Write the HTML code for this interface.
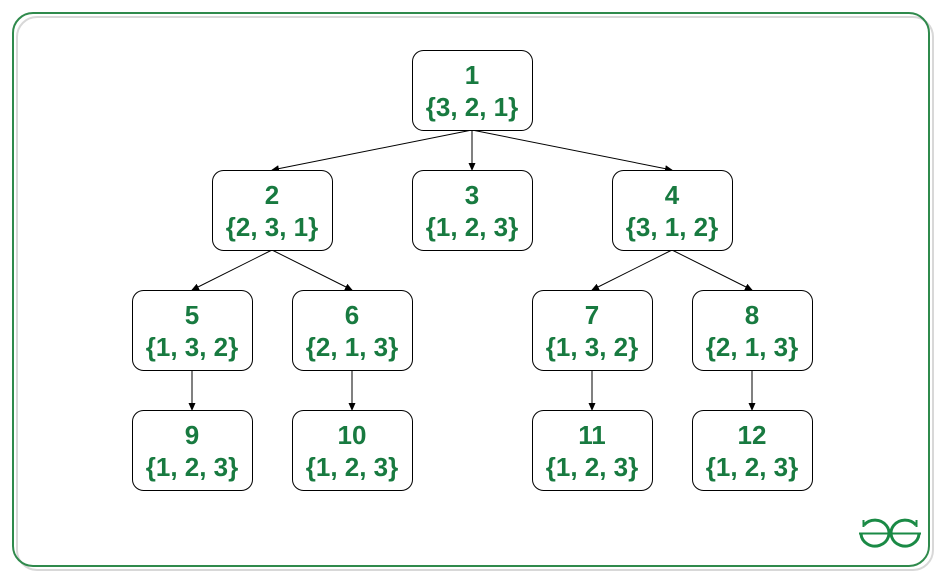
<!DOCTYPE html>
<html><head><meta charset="utf-8"><style>
html,body{margin:0;padding:0;background:#fff;}
svg{display:block}
text{font-family:"Liberation Sans",sans-serif;font-weight:bold;fill:#187a40;text-anchor:middle}
</style></head><body>
<svg width="945" height="581" viewBox="0 0 945 581" xmlns="http://www.w3.org/2000/svg">
<defs><marker id="a" markerWidth="8" markerHeight="8" refX="7" refY="4" orient="auto" markerUnits="userSpaceOnUse"><path d="M0,0.5 L8,4 L0,7.5 Z" fill="#000"/></marker></defs>
<rect x="17" y="17" width="916" height="553" rx="20" fill="none" stroke="#d8d8d8" stroke-width="2"/>
<rect x="13" y="13" width="916" height="553" rx="20" fill="none" stroke="#2f8a4c" stroke-width="2"/>
<g stroke="#000" stroke-width="1" marker-end="url(#a)">
<line x1="472" y1="130" x2="272" y2="170"/>
<line x1="472" y1="130" x2="472" y2="170"/>
<line x1="472" y1="130" x2="672" y2="170"/>
<line x1="272" y1="250" x2="192" y2="290"/>
<line x1="272" y1="250" x2="352" y2="290"/>
<line x1="672" y1="250" x2="592" y2="290"/>
<line x1="672" y1="250" x2="752" y2="290"/>
<line x1="192" y1="370" x2="192" y2="410"/>
<line x1="352" y1="370" x2="352" y2="410"/>
<line x1="592" y1="370" x2="592" y2="410"/>
<line x1="752" y1="370" x2="752" y2="410"/>
</g>
<g fill="#fff" stroke="#000" stroke-width="1">
<rect x="412.5" y="50.5" width="120" height="80" rx="11"/>
<rect x="212.5" y="170.5" width="120" height="80" rx="11"/>
<rect x="412.5" y="170.5" width="120" height="80" rx="11"/>
<rect x="612.5" y="170.5" width="120" height="80" rx="11"/>
<rect x="132.5" y="290.5" width="120" height="80" rx="11"/>
<rect x="292.5" y="290.5" width="120" height="80" rx="11"/>
<rect x="532.5" y="290.5" width="120" height="80" rx="11"/>
<rect x="692.5" y="290.5" width="120" height="80" rx="11"/>
<rect x="132.5" y="410.5" width="120" height="80" rx="11"/>
<rect x="292.5" y="410.5" width="120" height="80" rx="11"/>
<rect x="532.5" y="410.5" width="120" height="80" rx="11"/>
<rect x="692.5" y="410.5" width="120" height="80" rx="11"/>
</g>
<g font-size="26">
<text x="472" y="84">1</text><text x="472" y="116">{3, 2, 1}</text>
<text x="272" y="204">2</text><text x="272" y="236">{2, 3, 1}</text>
<text x="472" y="204">3</text><text x="472" y="236">{1, 2, 3}</text>
<text x="672" y="204">4</text><text x="672" y="236">{3, 1, 2}</text>
<text x="192" y="324">5</text><text x="192" y="356">{1, 3, 2}</text>
<text x="352" y="324">6</text><text x="352" y="356">{2, 1, 3}</text>
<text x="592" y="324">7</text><text x="592" y="356">{1, 3, 2}</text>
<text x="752" y="324">8</text><text x="752" y="356">{2, 1, 3}</text>
<text x="192" y="444">9</text><text x="192" y="476">{1, 2, 3}</text>
<text x="352" y="444">10</text><text x="352" y="476">{1, 2, 3}</text>
<text x="592" y="444">11</text><text x="592" y="476">{1, 2, 3}</text>
<text x="752" y="444">12</text><text x="752" y="476">{1, 2, 3}</text>
</g>
<g fill="none" stroke="#1a8a45" stroke-width="3">
<path d="M864,525 A14,13 0 1 1 861,534"/>
<path d="M916,525 A14,13 0 1 0 919,534"/>
<line x1="863.5" y1="520" x2="863.5" y2="527" stroke-width="2"/>
<line x1="916.5" y1="520" x2="916.5" y2="527" stroke-width="2"/>
<line x1="859" y1="533.5" x2="921" y2="533.5" stroke-width="2"/>
</g>
</svg>
</body></html>
